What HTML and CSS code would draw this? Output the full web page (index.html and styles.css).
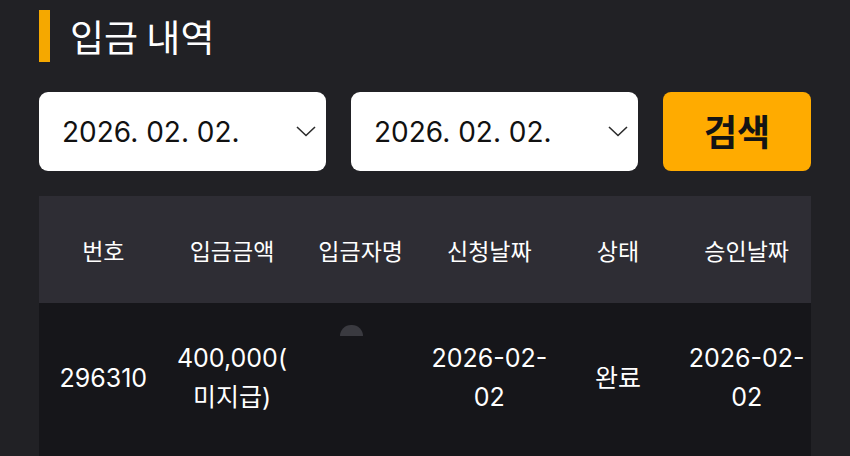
FILE: index.html
```html
<!DOCTYPE html>
<html>
<head>
    <title>입금 내역</title>
    <link rel="stylesheet" href="styles.css">
</head>
<body>
<div class="page">
    <h1 class="title">입금 내역</h1>

    <div class="filters">
        <div class="date-select">
            <span>2026. 02. 02.</span>
            <svg class="chevron" width="20" height="11" viewBox="0 0 20 11"><path d="M1 1 L10 9.5 L19 1" fill="none" stroke="#2b2b2b" stroke-width="1.6"/></svg>
        </div>
        <div class="date-select">
            <span>2026. 02. 02.</span>
            <svg class="chevron" width="20" height="11" viewBox="0 0 20 11"><path d="M1 1 L10 9.5 L19 1" fill="none" stroke="#2b2b2b" stroke-width="1.6"/></svg>
        </div>
        <button class="search-btn" type="button">검색</button>
    </div>

    <table class="history">
        <thead>
        <tr>
            <th>번호</th>
            <th>입금금액</th>
            <th>입금자명</th>
            <th>신청날짜</th>
            <th>상태</th>
            <th>승인날짜</th>
        </tr>
        </thead>
        <tbody>
        <tr>
            <td>296310</td>
            <td>400,000(미지급)</td>
            <td class="payer"><div class="name-blur"></div></td>
            <td>2026-02-02</td>
            <td>완료</td>
            <td>2026-02-02</td>
        </tr>
        </tbody>
    </table>
</div>
</body>
</html>
```

FILE: styles.css
```css
body {
    margin: 0;
    background-color: #212125;
    color: #fff;
    font-family: Inter, "Noto Sans CJK KR", sans-serif;
    overflow: hidden;
}

.page {
    padding: 10px 39px 0 39px;
}

.title {
    margin: 0;
    height: 52px;
    border-left: 11px solid #f5a800;
    padding-left: 20px;
    font-family: "Noto Sans CJK KR", sans-serif;
    font-size: 37px;
    font-weight: 400;
    line-height: 52px;
}

.filters {
    display: flex;
    gap: 25px;
    margin-top: 30px;
}

.date-select {
    flex: 1;
    height: 79px;
    background-color: #fff;
    border-radius: 9px;
    color: #111;
    display: flex;
    align-items: center;
    justify-content: space-between;
    padding: 0 6px 0 23px;
    font-size: 28px;
}

.chevron {
    margin-right: 4px;
}

.search-btn {
    width: 148px;
    height: 79px;
    border: none;
    border-radius: 8px;
    background-color: #ffab00;
    color: #141414;
    font-family: "Noto Sans CJK KR", sans-serif;
    font-size: 36px;
    font-weight: 700;
    line-height: 1;
    padding: 0 0 4px 0;
}

.history {
    width: 100%;
    margin-top: 25px;
    border-collapse: collapse;
    table-layout: fixed;
}

.history th {
    height: 107px;
    background-color: #2e2d34;
    font-family: "Noto Sans CJK KR", sans-serif;
    font-size: 23px;
    font-weight: 400;
    padding: 0;
}

.history tbody tr {
    height: 170px;
}

.history td {
    background-color: #16161a;
    text-align: center;
    vertical-align: middle;
    font-size: 25px;
    line-height: 39px;
    padding: 0 6px 20px 6px;
    line-break: anywhere;
}

.history td.payer {
    vertical-align: top;
    padding-top: 22px;
}

.name-blur {
    width: 23px;
    height: 11px;
    margin-left: 38px;
    border-radius: 12px 12px 0 0;
    background-color: #3a3a40;
}
```
